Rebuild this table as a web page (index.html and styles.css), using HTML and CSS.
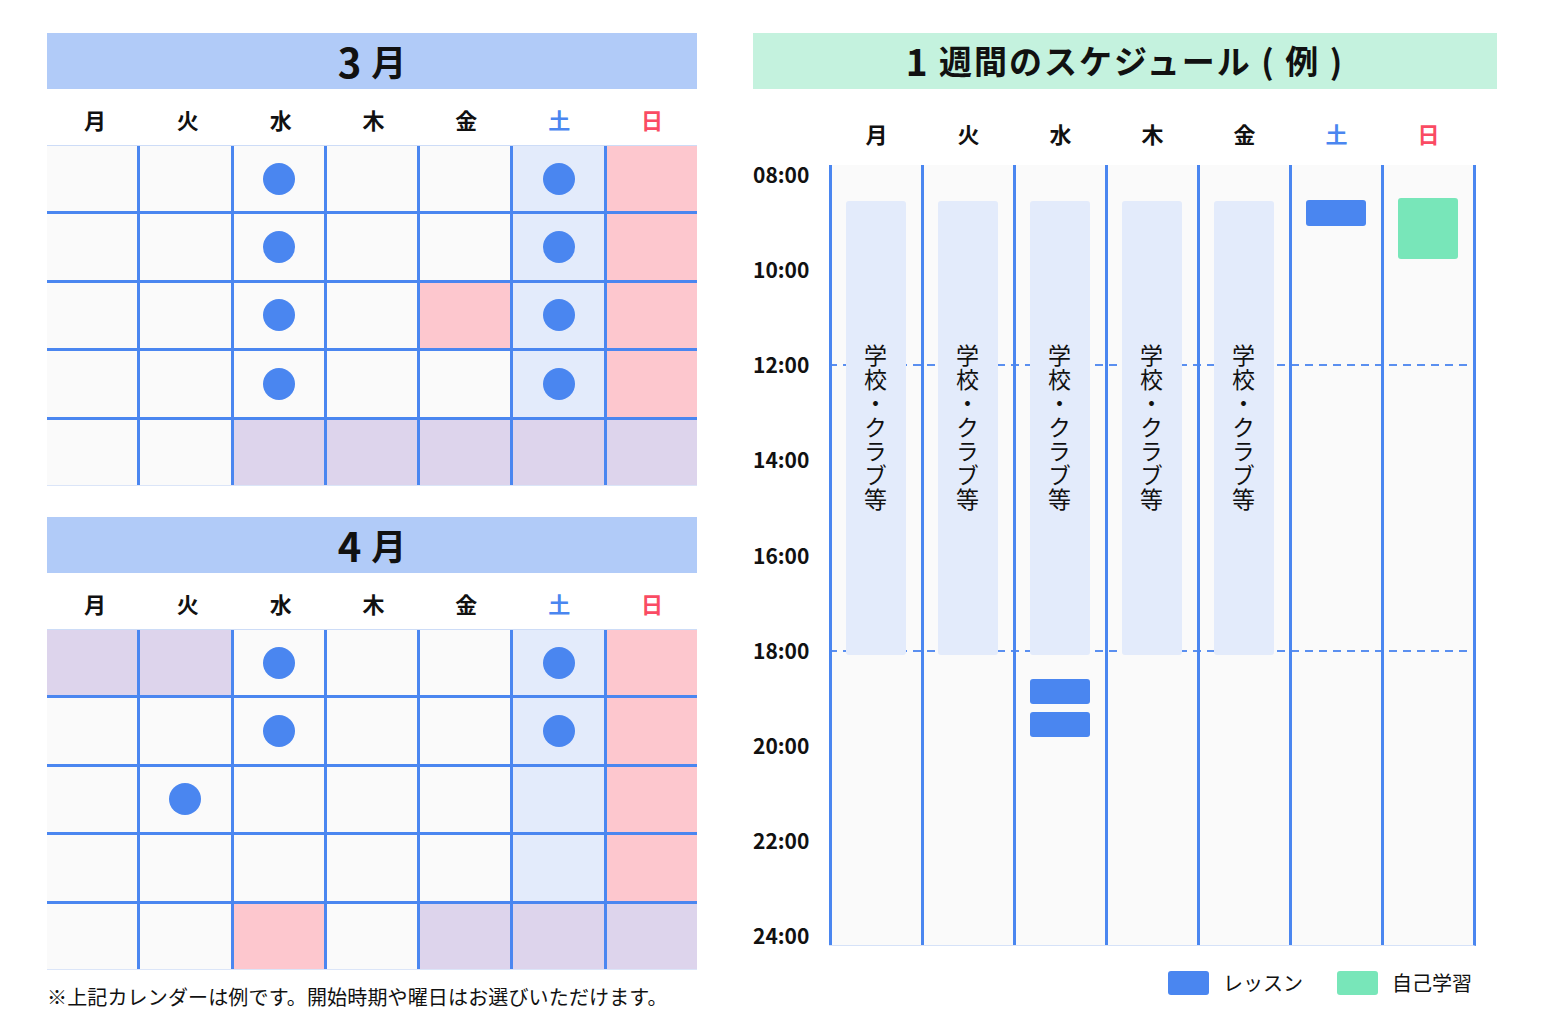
FILE: index.html
```html
<!DOCTYPE html>
<html lang="ja">
<head>
<meta charset="utf-8">
<title>スケジュール</title>
<link rel="stylesheet" href="styles.css">
</head>
<body>
<div class="page">
  <div class="left">
    <section class="cal">
      <div class="cal-head"><span class="num">3</span> 月</div>
      <div class="dow">
        <span>月</span><span>火</span><span>水</span><span>木</span><span>金</span><span class="sat-t">土</span><span class="sun-t">日</span>
      </div>
      <div class="grid">
        <div></div><div></div><div><i class="dot"></i></div><div></div><div></div><div class="sat"><i class="dot"></i></div><div class="sun"></div>
        <div></div><div></div><div><i class="dot"></i></div><div></div><div></div><div class="sat"><i class="dot"></i></div><div class="sun"></div>
        <div></div><div></div><div><i class="dot"></i></div><div></div><div class="sun"></div><div class="sat"><i class="dot"></i></div><div class="sun"></div>
        <div></div><div></div><div><i class="dot"></i></div><div></div><div></div><div class="sat"><i class="dot"></i></div><div class="sun"></div>
        <div></div><div></div><div class="pur"></div><div class="pur"></div><div class="pur"></div><div class="pur"></div><div class="pur"></div>
      </div>
    </section>
    <section class="cal cal2">
      <div class="cal-head"><span class="num">4</span> 月</div>
      <div class="dow">
        <span>月</span><span>火</span><span>水</span><span>木</span><span>金</span><span class="sat-t">土</span><span class="sun-t">日</span>
      </div>
      <div class="grid">
        <div class="pur"></div><div class="pur"></div><div><i class="dot"></i></div><div></div><div></div><div class="sat"><i class="dot"></i></div><div class="sun"></div>
        <div></div><div></div><div><i class="dot"></i></div><div></div><div></div><div class="sat"><i class="dot"></i></div><div class="sun"></div>
        <div></div><div><i class="dot"></i></div><div></div><div></div><div></div><div class="sat"></div><div class="sun"></div>
        <div></div><div></div><div></div><div></div><div></div><div class="sat"></div><div class="sun"></div>
        <div></div><div></div><div class="sun"></div><div></div><div class="pur"></div><div class="pur"></div><div class="pur"></div>
      </div>
    </section>
    <p class="note">※上記カレンダーは例です。開始時期や曜日はお選びいただけます。</p>
  </div>

  <div class="right">
    <div class="week-head"><span class="num1">1</span> 週間のスケジュール ( 例 )</div>
    <div class="week-dow">
      <span>月</span><span>火</span><span>水</span><span>木</span><span>金</span><span class="sat-t">土</span><span class="sun-t">日</span>
    </div>
    <div class="week-body">
      <div class="times">
        <span>08:00</span><span>10:00</span><span>12:00</span><span>14:00</span><span>16:00</span><span>18:00</span><span>20:00</span><span>22:00</span><span>24:00</span>
      </div>
      <div class="week-grid">
        <div class="dash" style="top:199px"></div>
        <div class="dash" style="top:485px"></div>
        <div class="col"><div class="blk school" style="top:36px;height:454px">学校・クラブ等</div></div>
        <div class="col"><div class="blk school" style="top:36px;height:454px">学校・クラブ等</div></div>
        <div class="col">
          <div class="blk school" style="top:36px;height:454px">学校・クラブ等</div>
          <div class="blk lesson" style="top:514px;height:25px"></div>
          <div class="blk lesson" style="top:547px;height:25px"></div>
        </div>
        <div class="col"><div class="blk school" style="top:36px;height:454px">学校・クラブ等</div></div>
        <div class="col"><div class="blk school" style="top:36px;height:454px">学校・クラブ等</div></div>
        <div class="col"><div class="blk lesson" style="top:35px;height:26px"></div></div>
        <div class="col"><div class="blk self" style="top:33px;height:61px"></div></div>
      </div>
    </div>
    <div class="legend">
      <span class="lg"><i class="sw sw-lesson"></i>レッスン</span>
      <span class="lg"><i class="sw sw-self"></i>自己学習</span>
    </div>
  </div>
</div>
</body>
</html>
```
FILE: styles.css
```css
* { box-sizing: border-box; }
html, body { margin: 0; padding: 0; background: #ffffff; }
body {
  font-family: "Noto Sans CJK JP", "Noto Sans", sans-serif;
  color: #111111;
}
.page {
  display: flex;
  gap: 56px;
  padding: 33px 0 0 47px;
}
.left { width: 650px; display: flex; flex-direction: column; }
.cal2 { margin-top: 31px; }
.cal-head {
  height: 56px;
  background: #b1cbf8;
  display: flex;
  align-items: center;
  justify-content: center;
  font-size: 35px;
  font-weight: 700;
  line-height: 1;
  padding-bottom: 1px;
}
.cal-head .num { font-size: 40px; margin-right: 10px; }
.dow {
  height: 56px;
  display: grid;
  grid-template-columns: repeat(7, 1fr);
  column-gap: 3px;
  align-items: center;
  text-align: center;
  font-size: 22px;
  font-weight: 700;
  padding-top: 3px;
  padding-left: 3px;
}
.sat-t { color: #4a86f0; }
.sun-t { color: #fa4b63; }
.grid {
  height: 341px;
  display: grid;
  grid-template-columns: repeat(7, 1fr);
  grid-template-rows: repeat(5, 1fr);
  gap: 3px;
  background: #4a86f0;
  border-top: 1px solid #cddcf7;
  border-bottom: 1px solid #dbe5f8;
}
.grid > div {
  background: #fafafa;
  display: flex;
  align-items: center;
  justify-content: center;
}
.grid > div.sat { background: #e3ebfb; }
.grid > div.sun { background: #fdc7ce; }
.grid > div.pur { background: #ddd4ec; }
.dot {
  width: 32px;
  height: 32px;
  border-radius: 50%;
  background: #4a86f0;
  display: block;
}
.note {
  margin: 13px 0 0;
  font-size: 20px;
  line-height: 28px;
  letter-spacing: 0.15px;
  color: #111;
}

.right { width: 744px; display: flex; flex-direction: column; }
.week-head {
  height: 56px;
  background: #c4f2de;
  display: flex;
  align-items: center;
  justify-content: center;
  font-size: 33px;
  font-weight: 700;
  line-height: 1;
  padding-bottom: 1px;
  letter-spacing: 2px;
  white-space: pre;
}
.week-head .num1 { font-size: 37px; }
.week-dow {
  height: 76px;
  margin-left: 76px;
  width: 647px;
  padding: 0 3px;
  display: grid;
  grid-template-columns: repeat(7, 1fr);
  column-gap: 3px;
  align-items: end;
  padding-bottom: 17px;
  text-align: center;
  font-size: 22px;
  font-weight: 700;
  line-height: 30px;
}
.week-body { display: flex; height: 781px; }
.times {
  width: 76px;
  display: flex;
  flex-direction: column;
  font-size: 21px;
  font-weight: 700;
  line-height: 18px;
}
.times span { height: 95.125px; flex: none; }
.week-grid {
  position: relative;
  width: 647px;
  height: 781px;
  display: flex;
  border-right: 3px solid #4a86f0;
  border-bottom: 1px solid #d6e2f8;
  background: #fafafa;
}
.col {
  position: relative;
  flex: 1;
  border-left: 3px solid #4a86f0;
}
.dash {
  position: absolute;
  left: 0;
  right: 0;
  height: 2px;
  background: repeating-linear-gradient(90deg, #5a8ff0 0 8px, transparent 8px 14px);
  z-index: 0;
}
.blk {
  position: absolute;
  left: 50%;
  width: 60px;
  margin-left: -31px;
  border-radius: 3px;
  z-index: 1;
}
.school {
  background: #e3ebfb;
  writing-mode: vertical-rl;
  display: flex;
  align-items: center;
  justify-content: center;
  font-size: 23px;
  line-height: 60px;
  color: #111;
  letter-spacing: 1px;
}
.lesson { background: #4a86f0; }
.self { background: #78e6b9; }
.legend {
  display: flex;
  justify-content: flex-end;
  align-items: center;
  gap: 34px;
  margin-top: 25px;
  padding-right: 25px;
  font-size: 20px;
  line-height: 24px;
}
.lg { display: flex; align-items: center; gap: 14px; }
.sw { display: block; width: 41px; height: 24px; border-radius: 3px; }
.sw-lesson { background: #4a86f0; }
.sw-self { background: #78e6b9; }
```
